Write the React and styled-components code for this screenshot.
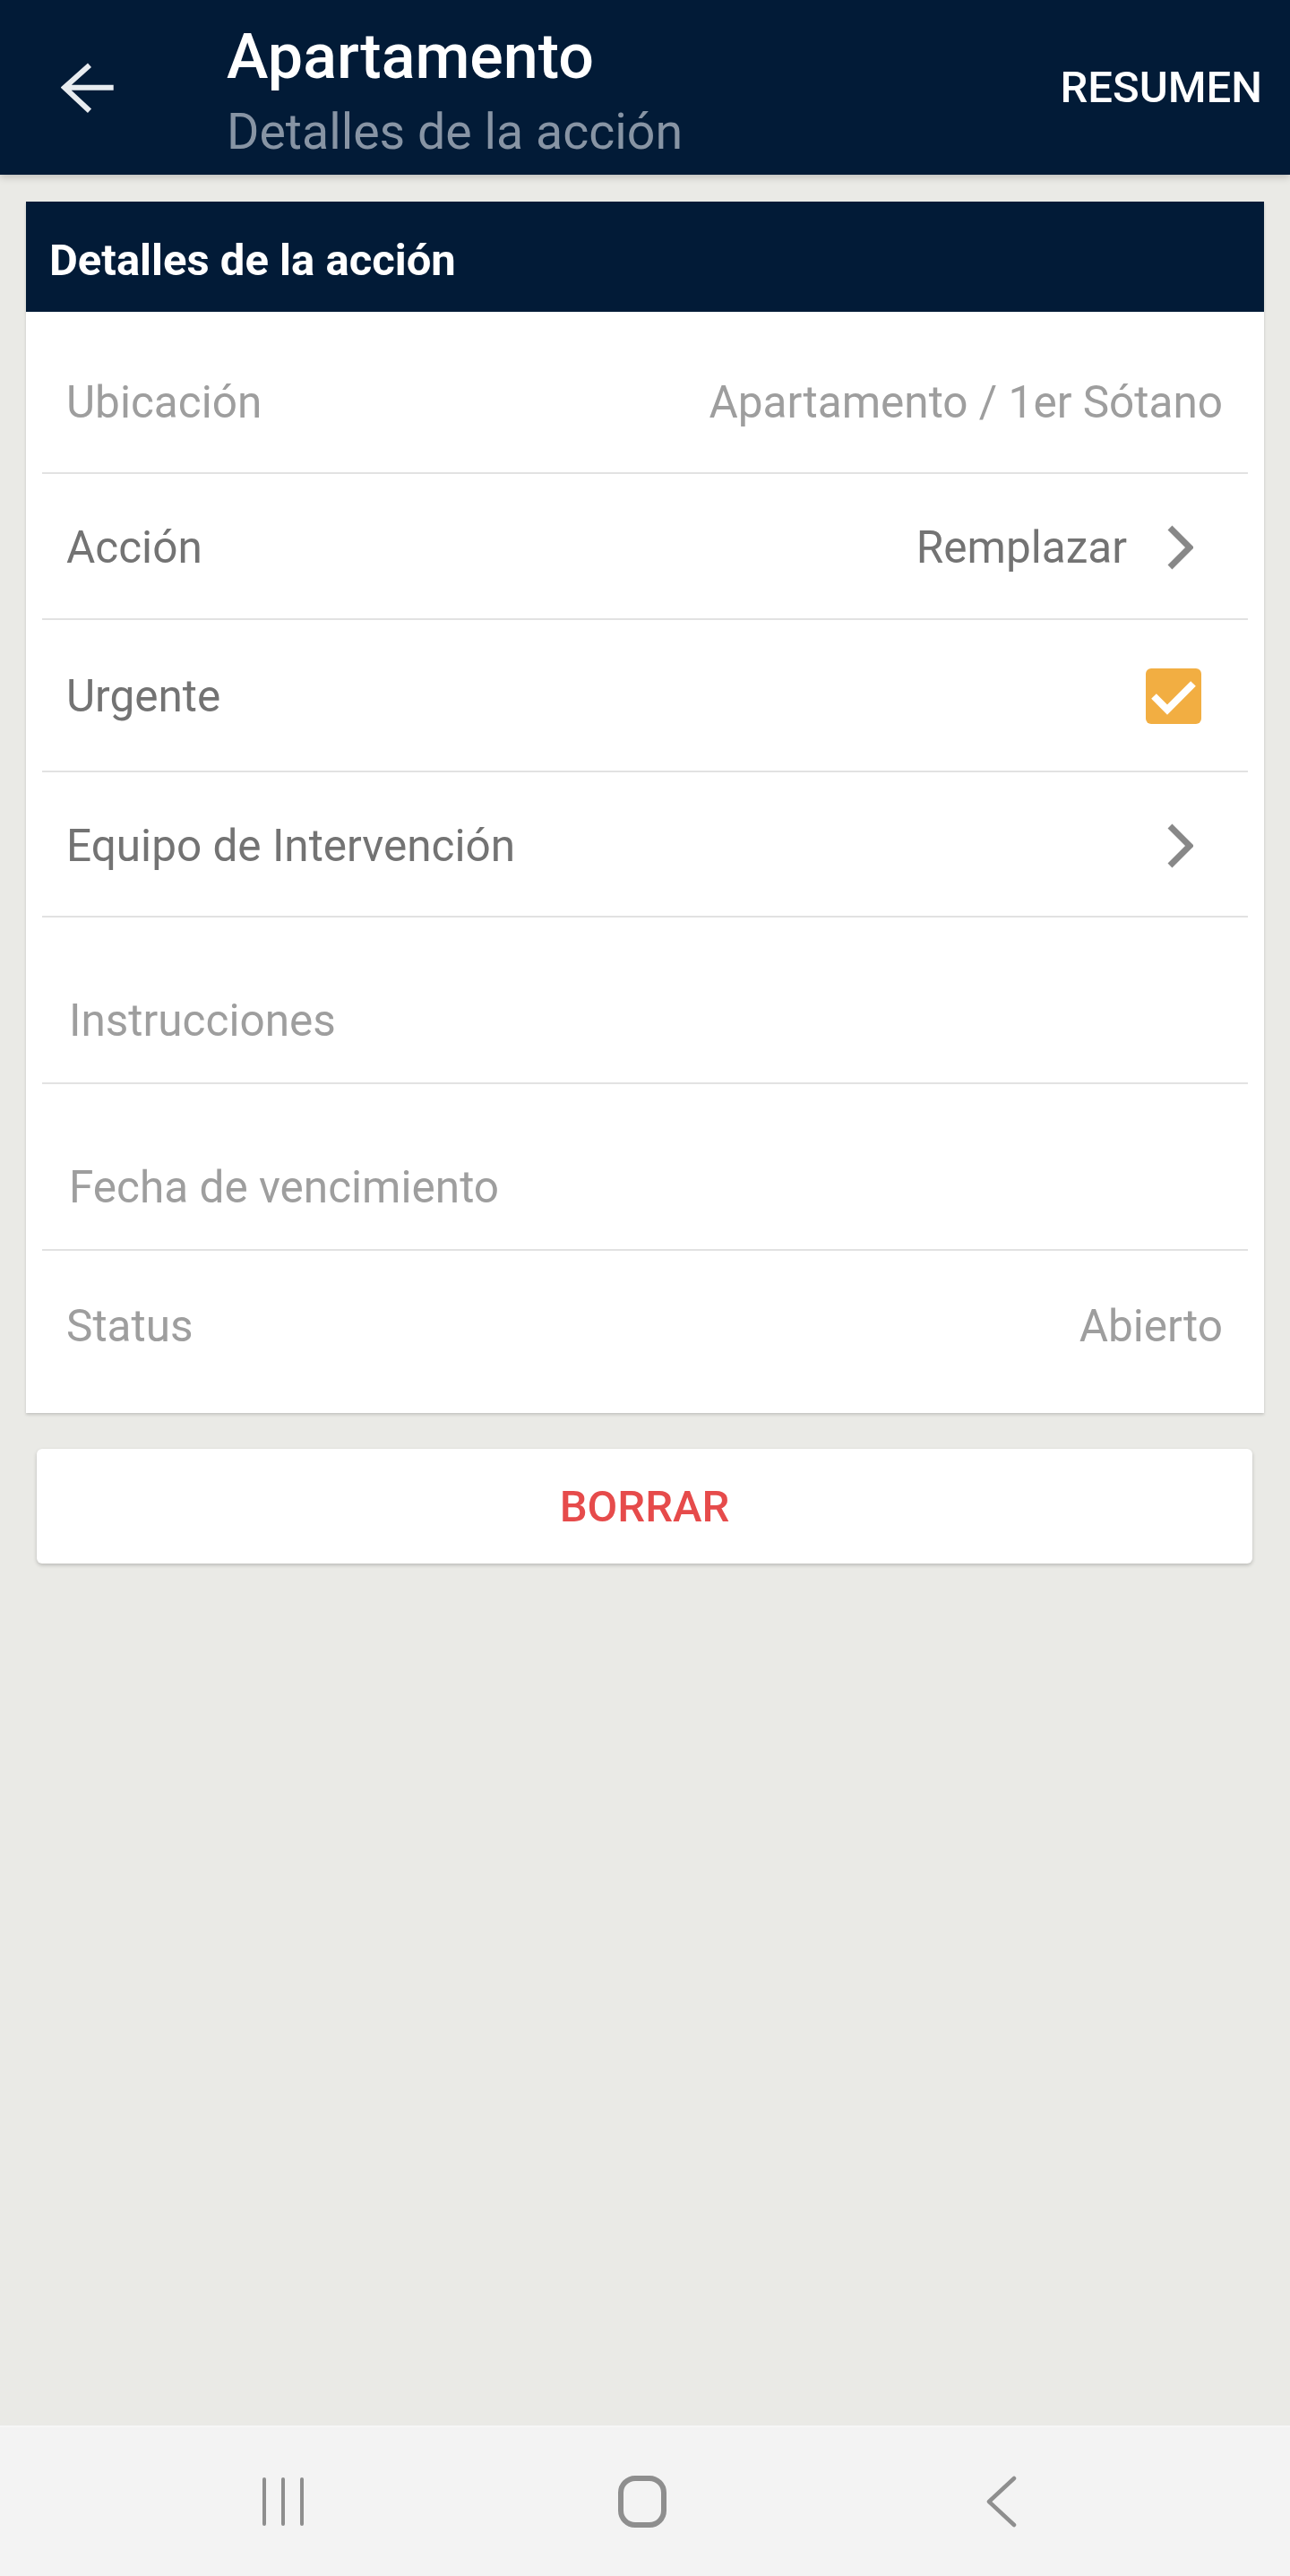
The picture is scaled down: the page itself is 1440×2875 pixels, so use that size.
import React from "react";
import styled, { createGlobalStyle } from "styled-components";

const NAVY = "#021b37";
const DIM = "#9e9e9e";
const TEXT = "#737373";

const GlobalStyle = createGlobalStyle`
  html, body {
    margin: 0;
    padding: 0;
  }
  body {
    font-family: Roboto, "Liberation Sans", sans-serif;
    background: #eaeae6;
  }
  * {
    box-sizing: border-box;
  }
`;

const Screen = styled.div`
  min-height: 100vh;
  display: flex;
  flex-direction: column;
  background: #eaeae6;
`;

const AppBar = styled.header`
  position: relative;
  z-index: 1;
  height: 195px;
  flex-shrink: 0;
  display: flex;
  align-items: center;
  padding: 0 31px 0 68px;
  background: ${NAVY};
  box-shadow: 0 3px 8px rgba(0, 0, 0, 0.18);
`;

const BackIcon = styled.svg`
  width: 60px;
  height: 60px;
  flex-shrink: 0;
`;

const TitleBlock = styled.div`
  flex: 1;
  display: flex;
  flex-direction: column;
  margin-left: 125px;
  padding-top: 8px;
`;

const Title = styled.div`
  font-size: 70px;
  line-height: 70px;
  font-weight: 500;
  color: #ffffff;
  margin-bottom: 23px;
`;

const Subtitle = styled.div`
  font-size: 55.5px;
  line-height: 54px;
  color: #8794a4;
`;

const BarAction = styled.div`
  font-size: 49px;
  font-weight: 500;
  color: #ffffff;
`;

const Content = styled.main`
  flex: 1;
  padding: 30px 29px 0;
`;

const Card = styled.section`
  background: #ffffff;
  box-shadow: 0 2px 3px rgba(0, 0, 0, 0.16);
`;

const CardHeader = styled.div`
  height: 123px;
  display: flex;
  align-items: center;
  padding: 7px 0 0 26px;
  background: ${NAVY};
  color: #ffffff;
  font-size: 49px;
  font-weight: 700;
`;

const Row = styled.div`
  height: ${(p) => p.$h}px;
  margin: 0 18px;
  display: flex;
  align-items: center;
  justify-content: space-between;
  padding-left: ${(p) => (p.$input ? 30 : 27)}px;
  padding-right: 28px;
  padding-top: ${(p) => Math.max(0, p.$shift * 2)}px;
  padding-bottom: ${(p) => Math.max(0, -p.$shift * 2)}px;
  border-bottom: ${(p) => (p.$last ? "none" : "2px solid #e2e2e2")};
`;

const Label = styled.span`
  font-size: 49.5px;
  color: ${(p) => (p.$dim ? DIM : TEXT)};
`;

const Trailing = styled.div`
  display: flex;
  align-items: center;
`;

const Value = styled.span`
  font-size: 49.5px;
  color: ${(p) => (p.$dim ? DIM : TEXT)};
`;

const Chevron = styled.svg`
  width: 30px;
  height: 50px;
  margin-left: 44px;
  margin-right: 33px;
`;

const CheckBox = styled.div`
  width: 62px;
  height: 62px;
  margin-right: 24px;
  border-radius: 6px;
  background: #f2ae42;
  display: flex;
  align-items: center;
  justify-content: center;
`;

const DeleteButton = styled.button`
  display: flex;
  align-items: center;
  justify-content: center;
  width: calc(100% - 25px);
  height: 128px;
  margin: 40px 13px 0 12px;
  border: none;
  border-radius: 6px;
  background: #ffffff;
  box-shadow: 0 2px 4px rgba(0, 0, 0, 0.2);
  font-family: Roboto, "Liberation Sans", sans-serif;
  font-size: 49px;
  font-weight: 500;
  color: #e64b4b;
`;

const SystemNav = styled.nav`
  height: 168px;
  flex-shrink: 0;
  display: flex;
  align-items: center;
  justify-content: center;
  gap: 281px;
  padding-right: 6px;
  background: #f3f3f3;
  border-top: 2px solid #f6f6f6;
`;

const NavSlot = styled.div`
  width: 120px;
  display: flex;
  justify-content: center;
`;

const NavIcon = styled.svg`
  width: 60px;
  height: 60px;
`;

const ChevronRight = () => (
  <Chevron viewBox="0 0 30 50">
    <path d="M4 3 L26 25 L4 47" fill="none" stroke="#888888" strokeWidth="7" />
  </Chevron>
);

const rows = [
  { label: "Ubicación", value: "Apartamento / 1er Sótano", h: 181, shift: 11.5, dim: true },
  { label: "Acción", value: "Remplazar", h: 163, shift: 1.5, chevron: true },
  { label: "Urgente", h: 170, shift: 1, check: true },
  { label: "Equipo de Intervención", h: 162, shift: 1.5, chevron: true },
  { label: "Instrucciones", h: 186, shift: 23, dim: true, input: true },
  { label: "Fecha de vencimiento", h: 186, shift: 23, dim: true, input: true },
  { label: "Status", value: "Abierto", h: 181, shift: -6.5, dim: true, last: true },
];

export default function App() {
  return (
    <Screen>
      <GlobalStyle />
      <AppBar>
        <BackIcon viewBox="0 0 60 60">
          <path
            d="M58.7 29.7 H4 M32 4.7 L4 29.7 L32 55.7"
            fill="none"
            stroke="#e8ecf0"
            strokeWidth="6"
          />
        </BackIcon>
        <TitleBlock>
          <Title>Apartamento</Title>
          <Subtitle>Detalles de la acción</Subtitle>
        </TitleBlock>
        <BarAction>RESUMEN</BarAction>
      </AppBar>

      <Content>
        <Card>
          <CardHeader>Detalles de la acción</CardHeader>
          {rows.map((r) => (
            <Row key={r.label} $h={r.h} $shift={r.shift} $last={r.last} $input={r.input}>
              <Label $dim={r.dim}>{r.label}</Label>
              <Trailing>
                {r.value && <Value $dim={r.dim}>{r.value}</Value>}
                {r.chevron && <ChevronRight />}
                {r.check && (
                  <CheckBox>
                    <svg width="62" height="62" viewBox="0 0 62 62">
                      <path
                        d="M9 31 L24 46 L53 17"
                        fill="none"
                        stroke="#ffffff"
                        strokeWidth="8"
                      />
                    </svg>
                  </CheckBox>
                )}
              </Trailing>
            </Row>
          ))}
        </Card>
        <DeleteButton>BORRAR</DeleteButton>
      </Content>

      <SystemNav>
        <NavSlot>
          <NavIcon viewBox="0 0 60 60">
            <g stroke="#8e8e8e" strokeWidth="4" strokeLinecap="round">
              <line x1="9" y1="5" x2="9" y2="55" />
              <line x1="30" y1="5" x2="30" y2="55" />
              <line x1="51" y1="5" x2="51" y2="55" />
            </g>
          </NavIcon>
        </NavSlot>
        <NavSlot>
          <NavIcon viewBox="0 0 60 60">
            <rect x="6" y="4" width="48" height="52" rx="16" fill="none" stroke="#8e8e8e" strokeWidth="6" />
          </NavIcon>
        </NavSlot>
        <NavSlot>
          <NavIcon viewBox="0 0 60 60">
            <path
              d="M44 4 L16 30 L44 56"
              fill="none"
              stroke="#8e8e8e"
              strokeWidth="4.5"
              strokeLinecap="round"
              strokeLinejoin="round"
            />
          </NavIcon>
        </NavSlot>
      </SystemNav>
    </Screen>
  );
}
